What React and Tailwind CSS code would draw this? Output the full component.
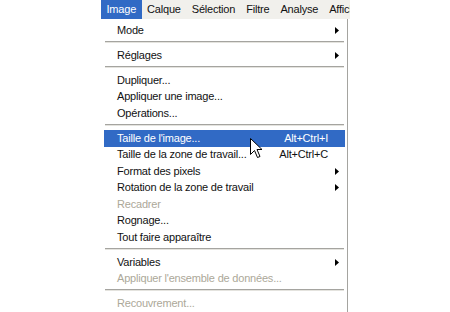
import React from 'react';

// Photoshop "Image" menu, Windows XP style
const menuBar = ['Image', 'Calque', 'Sélection', 'Filtre', 'Analyse', 'Affichage'];

const groups = [
  [{ label: 'Mode', sub: true }],
  [{ label: 'Réglages', sub: true }],
  [
    { label: 'Dupliquer...' },
    { label: 'Appliquer une image...' },
    { label: 'Opérations...' },
  ],
  [
    { label: "Taille de l'image...", shortcut: 'Alt+Ctrl+I', active: true },
    { label: 'Taille de la zone de travail...', shortcut: 'Alt+Ctrl+C' },
    { label: 'Format des pixels', sub: true },
    { label: 'Rotation de la zone de travail', sub: true },
    { label: 'Recadrer', disabled: true },
    { label: 'Rognage...' },
    { label: 'Tout faire apparaître' },
  ],
  [
    { label: 'Variables', sub: true },
    { label: "Appliquer l'ensemble de données...", disabled: true },
  ],
  [{ label: 'Recouvrement...', disabled: true }],
];

const Arrow = ({ white }) => (
  <svg width="4" height="7" viewBox="0 0 4 7" className="shrink-0">
    <path d="M0 0 L4 3.5 L0 7 Z" fill={white ? '#fff' : '#000'} />
  </svg>
);

const MenuRow = ({ item }) => {
  const color = item.active ? 'text-white' : item.disabled ? 'text-[#aca899]' : 'text-[#111]';
  return (
    <div
      className={`flex items-center h-[16.5px] pl-[13px] pr-[17px] ${item.active ? 'bg-[#316ac5]' : ''} ${color}`}
    >
      <span className="flex-1 whitespace-nowrap">{item.label}</span>
      {item.shortcut && <span className="whitespace-nowrap">{item.shortcut}</span>}
      {item.sub && (
        <span className="-mr-[11px]">
          <Arrow white={item.active} />
        </span>
      )}
    </div>
  );
};

const Separator = () => (
  <div className="h-[8.5px] pt-[2px] px-[1px]">
    <div className="h-[1px] bg-[#a5a4a0]" />
    <div className="h-[1px] bg-[#e4e3de]" />
  </div>
);

const Cursor = () => (
  <svg
    width="13"
    height="21"
    viewBox="0 0 13 21"
    className="absolute left-[250px] top-[138px]"
  >
    <path
      d="M0.5 0.5 L0.5 16.5 L4.5 12.5 L7.5 19.5 L10 18.5 L7 11.5 L12 11.5 Z"
      fill="#fff"
      stroke="#000"
      strokeWidth="1"
      strokeLinejoin="miter"
    />
  </svg>
);

export default function App() {
  return (
    <div
      className="relative w-[450px] h-[312px] bg-white overflow-hidden text-[11px] leading-none tracking-[-0.2px]"
      style={{ fontFamily: '"Liberation Sans", Arial, sans-serif' }}
    >
      <div className="ml-[101px] w-[249px]">
        {/* menu bar */}
        <div className="flex h-[19px] bg-[#f1f0ec] overflow-hidden whitespace-nowrap">
          {menuBar.map((m, i) => (
            <div
              key={m}
              className={`flex items-center px-[5.5px] ${i === 0 ? 'bg-[#316ac5] text-white' : 'text-[#111]'}`}
            >
              {m}
            </div>
          ))}
        </div>

        {/* dropdown */}
        <div className="w-[247px] h-[293px] pt-[3px] pl-[3px] pr-[2px] border-r border-[#a5a4a0] bg-white">
          {groups.map((g, gi) => (
            <div key={gi}>
              {gi > 0 && <Separator />}
              {g.map((item) => (
                <MenuRow key={item.label} item={item} />
              ))}
            </div>
          ))}
        </div>
      </div>
      <Cursor />
    </div>
  );
}
